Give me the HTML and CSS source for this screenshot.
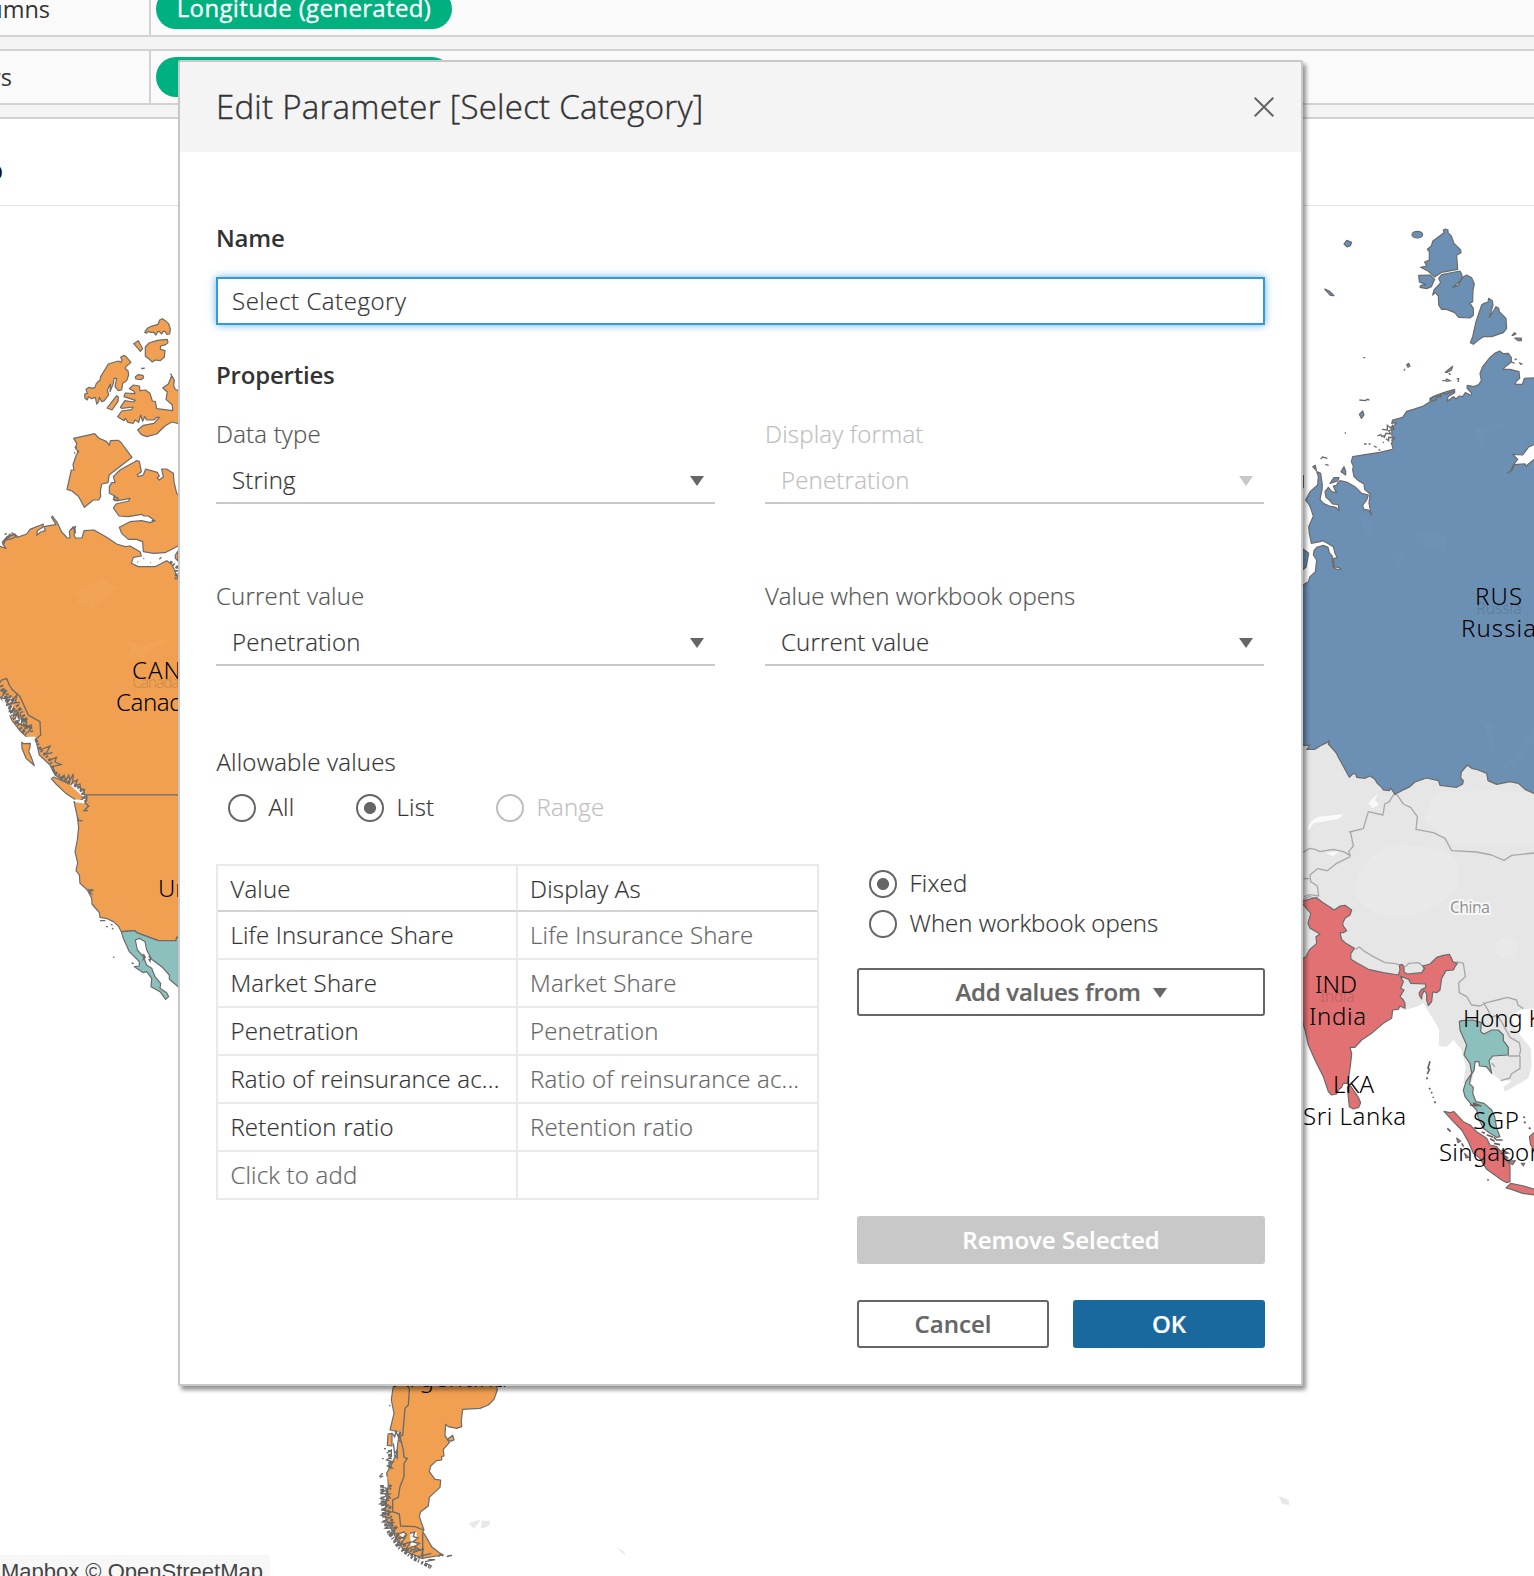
FILE: index.html
```html
<!DOCTYPE html>
<html lang="en">
<head>
<meta charset="utf-8">
<title>Edit Parameter</title>
<link rel="stylesheet" href="styles.css">
</head>
<body>
<div class="workbook">
  <div class="shelf shelf-columns">
    <div class="shelf-name"><span>Columns</span></div>
    <div class="shelf-body"><span class="pill"><span class="pill-text">Longitude (generated)</span></span></div>
  </div>
  <div class="shelf shelf-rows">
    <div class="shelf-name"><span>Rows</span></div>
    <div class="shelf-body"><span class="pill"></span></div>
  </div>
  <div class="sheet-title"><span>o</span></div>
  <svg class="map" width="1534" height="1370" viewBox="0 206 1534 1370">
    <!-- Asia base layer -->
    <g transform="translate(1290 800) scale(.33333)">
      <path class="asia" d="M30-180H740V625L695 628 660 650 690 705 722 745 725 800 715 835 680 855 645 875 640 862 665 842 630 840 600 815 560 780 545 850 520 850 527 800 515 750 490 720 470 740 446 738 448 690 425 650 400 610 380 620 345 630 310 620 180 500 40 480 30 480Z"/>
      <path class="asia-light" d="M330 350q-90 0-130-60-20-90 90-150 110-20 200 30 50 80-40 140-60 40-120 40z"/>
      <path class="asia-light" d="M490 130l242 0v-150l-120-10-180 10-30 80z"/>
      <path class="white" d="M54 82q14-36 58-34l50-6-16 14-50 10-24 2-18 24zM105 158l44-4-20 14zM235 10l30-32-10 22 12 14-20 10z"/>
      <circle class="asia-light" cx="650" cy="443" r="32"/>
      <g class="borders">
        <path d="M40 157L58 145 75 148 90 155 130 148 160 155 181 167 176 155 190 138 182 98 178 96 220 86 235 35 279 45 284 12 298 5 308-12 316-20 325-10 340 12 362 22 382 50 378 88 430 98 465 115 485 152 560 156 605 165 642 181 665 166 732 159"/>
        <path d="M181 170L140 190 112 212 82 206 60 225 62 245 82 258 86 288 60 284 42 290M40 236H58M40 298L58 290 80 296"/>
        <path d="M196 448L208 441 225 455 250 470 285 488 310 490 328 494M345 500L357 490 385 488 402 500 400 512M500 485L520 490 526 530 506 548 508 578 530 590 545 615 570 618 590 608 622 600 652 592 680 600 684 615 700 626M580 606L596 634 602 652 620 646 634 664 660 712 688 728 692 750 688 768 655 768M690 768L690 805 664 822 660 834 632 842M605 790L615 800"/>
      </g>
    </g>

    <!-- North America -->
    <g transform="translate(0 300) scale(.33333)">
      <g class="land orange">
        <path d="M434 97l8-12 12-6 20-6 5-13 8-4 9 6 10 9 5 16-2 15-8 1-6-9-5 0-5 8-7-7-5 0-5 10-7-8-9 0-7-3-6 6z"/>
        <path d="M401 131l14-9 13 24-7 8-10-12z"/>
        <path d="M436 141l11-12 25-8 30-3 2 10-7 6-15 4-1 10 14 4-2 19-12 11-15-2-9 6-11-10-10-7z"/>
        <path d="M406 231l8-7 15 2 2 7-8 6-15-2z"/>
        <path d="M258 268L268 262 278 265 285 262 289 250 300 240 302 230 325 192 355 183 362 187 366 180 362 172 372 166 380 172 393 187 378 200 376 206 384 212 386 225 380 242 368 250 365 270 355 272 345 260 350 235 342 235 340 250 330 275 331 252 322 270 326 285 313 302 305 305 298 292 296 305 290 312 286 292 275 296 265 290 262 300 255 295 254 282 262 280Z"/>
        <path d="M321 324L350 287 355 290 354 304 336 330Z"/>
        <path d="M353 350L365 333 395 329 399 321 365 325 361 322 375 302 400 306 406 301 372 290 376 279 405 281 402 274 388 266 400 255 418 258 420 272 436 270 450 280 457 303 466 304 470 326 518 332 517 315 498 298 502 276 488 264 505 252 515 227 523 240 521 258 526 268 540 275V372L515 366 495 378 470 402 440 410 424 404 413 390 430 376 462 370 478 352 470 352 462 360 440 360 434 350 428 364 422 345 416 367 405 360 400 370 384 367 376 355 372 362Z"/>
        <path d="M221 415L284 401 296 414 320 425 328 436 331 422 354 421 362 426 396 472 328 524 324 548 305 552 301 575 302 590 296 600 280 600 253 622 236 590 216 573 201 568 214 510 222 510 219 494 229 465 236 454 227 446 230 430Z"/>
        <path d="M328 560L328 580 345 588 340 598 355 602 390 595 386 603 348 612 340 624 357 648 385 650 425 643 432 648 445 648 465 662 450 668 425 662 390 665 358 682 365 700 385 718 410 718 428 725 430 755 460 760 495 758 540 735V590L530 580 522 545 520 520 500 507 485 507 490 530 478 540 472 534 478 528 472 517 437 507 430 525 415 530 412 524 424 515 418 484 410 482 360 510 340 530 345 548 335 548Z"/>
        <path d="M526 765l8-12v30l-8-8z"/>
        <path d="M-8 740L0 739 18 745 8 732 10 724 24 708 46 702 52 712 80 702 90 688 130 672 128 682 112 692 110 706 122 696 136 692 132 680 152 676 168 674 155 652 157 648 172 668 185 696 202 714 210 714 208 694 220 680 226 690 222 704 226 714 246 714 252 692 282 690 320 712 350 732 375 740 390 738 420 755 424 768 400 772 394 790 415 800 465 800 500 782 515 792 524 812 540 845V1485H254L250 1470 225 1455 195 1445 165 1425 150 1395 118 1365 108 1320 78 1310 58 1290 35 1260 18 1215-8 1180Z"/>
        <path d="M65 1327L72 1331 91 1330 90 1342 86 1354 94 1372 103 1397 78 1375 66 1345Z"/>
        <path d="M154 1436L162 1431 200 1448 225 1462 245 1485 248 1498 235 1504 215 1492 195 1478 168 1452Z"/>
        <path d="M222 1505L248 1508 258 1500 260 1485H540V1912H530L528 1922H475L410 1898 405 1892 364 1895 355 1878 340 1865 318 1855 300 1852 298 1838 276 1812 275 1795 262 1770 240 1750 238 1725 228 1712 233 1688 225 1655 232 1620 236 1582 232 1550Z"/>
      </g>
      <g class="land teal" transform="translate(0 870)"><path d="M364 1025L405 1022 410 1028 475 1052H528L530 1042H540V1195L508 1168 508 1155 485 1130 455 1108 440 1080 435 1055 418 1045 406 1050 412 1080 430 1100 440 1125 455 1135 465 1160 482 1180 480 1195 500 1208 506 1220 497 1228 480 1205 453 1190 455 1165 440 1145 430 1148 403 1130 418 1128 418 1115 388 1085 370 1045Z"/></g>
      <!-- Pacific coast inlets -->
      <g transform="translate(0 870)">
        <path class="sound" d="M8 320l20 50 22 10M30 325l8 50 30 25M70 445h36M212 580l40 38M225 632l28 4"/>
        <path class="fjord" d="M0 278L5 270 20 266 28 285 36 298 60 320 85 375 120 395 122 435 105 450"/>
        <path class="fringe" d="M4 285L20 330 40 380 65 420 85 435M28 318L55 350 80 395"/>
        <path class="fringe thin" d="M15 300L22 314 18 322 36 336 32 350 52 366 50 378 70 388 68 404 92 412 96 430M108 450L122 480 150 510 162 545 205 575 240 595 262 640"/>
        <path class="fjord" d="M0 300l14 8-10 16 20 4-4 18 14-6-6 24 16-4-4 20 14-14 4 26-14 6 20 6 2-18 14 12-6 18 20-6-10 18M36 330l14-14-4 22 14 0M60 370l6 22 14-6-2 26 18-8M120 480l30-12-12 24 20-4M145 512l24-10-4 14 18 8-26 6 10 22M180 558l4 12 8-14 6 16 8-16 4 14 10-18-2 24 14-6-6 16 14-4 2 16 12 0-6 14 14 6M262 620l-6 20 10 8-14 14 12 0M232 680l4 12h12M262 900l18 0-12 6 10 8M300 992h16M318 1010l6 0M336 1014l4 4M332 1004l6 0M340 1100l3 3M395 1118l6 4M428 1092l8 10-6 6 4-14M446 1098l6 6-2 10-4-8"/>
      </g>
      <path class="fjord" d="M424 203l4 4M428 206l6-2M511 221l4 4M14 704l6-4M26 703l6 0M34 698l8 4M6 728l14-16 20-8 10 4-14 8-20 4-6 16M14 720l20-14M224 440l6 4M222 458l4 2M230 452l6 4M340 590l14 4 0 8-12 0M455 662l10 0M412 785l2 2M430 776l3 0M450 788l2 0M478 778l6-6M210 690l16-10-4 14 6 6"/>
      <path class="fringe thin" d="M510 785L530 800 528 840"/>
      <path class="orange-light" d="M218 880l40-17 60-30 15 22 22 8-42 30-20 20-25 15-2-23-16 15-25-15 20-10zM380 1020l45 18 55-20 30 5-50 20-35 40-20-14-33 15 22-32z"/>
    </g>

    <!-- Russia -->
    <g transform="translate(1290 210) scale(.33333)">
      <g class="land blue">
        <ellipse cx="382" cy="74" rx="16" ry="10"/>
        <path d="M162 102l8-11 15 6-4 10-9 4zM104 237l14 6 14 14-11-1z"/>
        <path d="M462 68L460 60 466 57 474 60 474 68 484 78 492 100 512 120 513 128 500 136 503 178 455 187 434 201 415 184 392 172 410 168 404 156 418 150 418 125 412 118 424 108 428 94Z"/>
        <path d="M386 196L420 195 434 208 424 230 410 236 390 232 392 226 408 224 388 216Z"/>
        <path d="M446 205L455 194 510 183 516 195 514 210 488 232 504 226 520 200 530 195 545 203 553 222 549 240 548 275 540 280 550 295 550 316 540 324 506 322 494 308 470 298 455 298 446 285 445 258 436 248 428 255 432 240 446 225 452 218Z"/>
        <path d="M541 398L548 380 558 335 575 285 582 280 594 276 596 265 607 272 609 285 598 322 612 300 618 290 626 295 628 305 648 325 650 355 640 368 605 380 580 380 565 390 550 403Z"/>
        <path d="M666 376l8-8 4 4-8 4zM674 384l20 0 0 8-9 0z"/>
        <path d="M750 503L703 505 697 523 676 523 678 515 689 505 687 485 660 478 638 478 650 467 664 456 664 443 655 430 640 431 629 423 614 430 600 442 578 470 570 490 574 512 566 524 552 530 532 526 531 534 545 550 543 556 526 548 518 560 508 558 498 566 490 560 472 574 474 560 494 548 494 538 470 545 440 555 420 565 420 575 400 588 370 598 350 604 338 622 308 630 305 640 320 638 305 655 306 680 314 684 304 700 310 717 270 727 230 733 188 740 184 755 190 768 188 780 192 800 205 812 222 822 224 838 240 852 237 880 244 916 236 900 222 898 218 886 230 870 235 855 215 850 195 830 170 816 150 812 142 820 140 826 130 828 135 840 140 848 125 845 115 832 105 845 108 862 118 870 128 882 145 884 147 902 138 892 118 888 100 880 90 868 96 840 97 825 92 790 80 785 85 800 83 825 60 845 47 870 58 885 62 895 70 918 56 950 58 970 64 1000 90 995 98 992 110 998 130 1010 135 1030 142 1043 130 1046 132 1070 148 1073 153 1077 140 1078 130 1072 126 1048 128 1040 118 1028 114 1012 100 1006 80 1012 72 1022 70 1035 80 1050 76 1085 60 1100 55 1115 30 1130V1606L52 1606 60 1605 50 1618 75 1618 90 1608 110 1598 118 1592 115 1602 138 1628 155 1660 178 1702 188 1692 196 1690 200 1702 225 1705 240 1698 255 1708 262 1720 275 1732 280 1740 298 1742 302 1734 315 1753 335 1742 360 1730 375 1716 410 1704 445 1712 450 1726 500 1732 518 1722 520 1712 512 1704 514 1686 532 1665 545 1675 565 1680 590 1690 594 1712 620 1723 660 1715 685 1720 705 1738 732 1750H750Z"/>
        <path d="M153 785l9-15 5 13 0 12zM120 820l12-17 15 0-4 10zM68 770l8-4 3 16z"/>
        <path d="M350 464l6-4 4 8-6 4zM342 482l3-6M466 487l22-18-4 12-12 6zM208 613l10-10 4 12-8 10z"/>
        <path d="M30 1010L56 1030 48 1072 30 1085Z"/>
      </g>
      <path class="fjord" d="M220 443h6M208 570l18 2 6-4 6 2M457 512h10l3-5 10 5-12 2M500 506l6 0-2 10M476 490l6 4M420 570l10-10 20-3 10-7 8 3 12-6 14-2M423 574l15-4 4-10 14 0M276 658l16 2 0-14 10 8 6-8 4 12-16 4 6 10-14-2-6 14M262 678l10-4 4 6 8-4M288 686l8 6 0-10 16 2-8 8M222 702h8M236 702h6M252 708l8 4M266 718l4 4M278 696l4 2M164 669h4M92 747l6-6 14 4M106 763l10 3M674 460l-9-4M674 450l6-4M687 458l8 4-4 2M40 795v40"/>
      <g class="water">
        <path d="M745 698L715 712 698 735 668 733 683 748 668 768 662 785 652 790 668 778 672 764 705 762 708 768 745 738Z"/>
      </g>
      <path class="blue-light" d="M553 650l35 10 55-30-2 20-45 10-20 55-15-35zM565 1530q45 0 45 25l5 60-15 20-10-70zM210 905l40 40-15 30-20-30zM360 980l60-20 50 20v50l-60-20zM620 1675q70-30 112-135v50q-30 65-90 90zM300 1035l55-10-30 50z"/>
    </g>

    <!-- South and South-East Asia -->
    <g transform="translate(1290 800) scale(.33333)">
      <g class="land red">
        <path d="M30 306L56 298 80 293 95 305 133 330 150 318 165 316 185 330 180 345 165 355 158 370 160 378 170 392 160 398 150 398 155 418 165 428 193 445 182 462 183 478 200 488 235 508 280 518 325 525 330 510 328 496 336 493 342 500 342 516 352 522 395 518 404 505 398 498 420 492 440 472 460 466 478 463 486 478 488 485 502 490 495 500 490 510 468 512 455 535 450 570 440 578 428 576 425 605 415 617 410 600 410 580 402 572 396 585 395 597 388 585 388 578 395 568 408 562 406 552 362 550 356 538 330 528 340 545 332 565 342 570 330 590 340 600 345 610 345 625 330 618 325 628 308 630 305 655 280 670 245 700 215 720 195 742 180 742 185 760 182 790 178 820 172 850 160 850 155 862 145 870 140 882 125 885 115 875 100 830 75 780 55 735 45 690 30 640V480L48 470 58 450 80 430 78 410 90 402 60 385 54 370 62 340 45 320Z"/>
        <path d="M172 862L182 858 205 892 212 908 206 922 190 927 178 920Z"/>
        <path d="M462 934L480 938 492 935 520 965 540 975 560 995 590 1015 600 1035 620 1040 640 1062 660 1095 660 1145 650 1148 635 1140 590 1108 570 1075 550 1060 535 1025 515 990 490 965Z"/>
        <path d="M648 1164L662 1150 702 1158 740 1170V1186L698 1180 664 1168ZM718 1010L736 995V1055L722 1035ZM500 1014l12 10-8 4zM524 1060l12 12-8 2zM652 1084l24-2-8 12zM694 1090l10 0-4 8z"/>
      </g>
      <g class="land teal">
        <path d="M508 664L515 662 548 660 574 668 572 695 582 702 605 690 625 690 640 705 640 722 655 742 655 765 608 768 597 782 605 820 590 800 568 798 567 785 555 785 552 812 545 822 538 850 550 862 548 880 558 905 582 910 605 930 614 950 620 985 630 1010 620 1012 600 1000 580 985 565 955 560 930 545 915 525 890 520 870 528 845 545 820 540 790 522 765 530 735 510 690Z"/>
      </g>
      <path class="specks" d="M420 784l-6 20 4 4-6 14M410 832l2 6M417 864l4 4M424 876l2 4M430 890l0 4M434 904l2 6M472 985l10 10M592 1138l4 3M700 950l5 3M702 965l5 4M575 996l10 4M590 1004l20 8M600 1016l14 8M612 1012l6 6M618 1020h20M612 1030l18 4M635 1050l18 9-18 2 20 14M716 983l6 3M540 915l18 2-8-8 24 10M515 1030l6 10M556 1094l6 4"/>
    </g>

    <!-- South America -->
    <g transform="translate(360 1370) scale(.33333)">
      <g class="land orange">
        <path d="M105 30L98 60 94 90 102 130 90 180 118 186 114 215 110 250 96 280 80 310 85 345 78 400 75 440 100 490 130 540 185 565 250 555 238 548 215 530 195 495 188 485 192 480 178 440 182 425 205 408 208 382 240 352 242 330 225 328 208 305 212 288 230 272 245 270 245 260 252 258 250 238 268 218 255 196 257 163 265 170 290 175 305 170 304 152 308 118 360 115 385 105 402 88 412 60 405 30Z"/>
        <path d="M84 192l12-2 0 38-14-2zM262 208l16-12 4 14-10 4z"/>
      </g>
      <path class="white" d="M102 190l14-6-4 30-10 10zM150 490l20-4 0 20-10 10 14 8-22 4zM118 490l20-2-12 16zM62 320l20 0 0 20zM120 505l14 0-6 6z"/>
      <path class="border-line" d="M142 30L148 60 145 105 135 115 128 195 120 200 130 240 132 262 142 265 132 280 132 320 120 350 115 382 98 390 98 425 118 432 122 468 165 470 190 480M188 488V568"/>
      <path class="fringe" d="M90 240L90 300M66 345L68 400 72 440 82 480 116 532 160 565 210 590"/>
      <path class="fringe thin" d="M88 345L94 352 76 370 88 384 74 402 90 412 82 430 98 446 88 462 106 472 98 488 118 500 116 516 134 522 132 538 152 542 156 556 180 562"/>
      <path class="fjord" d="M60 350l24 6-20 12 26 4-28 14 20 6-22 10 26 4-20 14 28 6-30 10 24 8-20 12 32 2-24 16 34 0-22 18 30-2-14 20 32-8-18 24 34-10-16 24 32-12-8 20 30-12-6 22 30-8M96 190l8 10 4-16 6 14 8-12-6 24 10 8M100 220l4 30 8-10 0 24-10-8M80 250l14-10 0 20-14 10 20 6-18 12 18 8M58 320l10-10M60 322l10-4M120 490l12-4 8 8-10 10-12-4M150 490l14-4-4 14 14 4-16 12 20 4-14 10 20 12-30-4M195 575l30-6-20 0M200 582l14 6-6 8M236 560l4-6 10 4M260 560l16-4-14 2M66 266l5 0M72 236l6 0M88 105l3 3"/>
      <path class="falkland" d="M326 460l22-8 14-2-20 26zM366 452l24 0-2 14-16 8-10 0zM770 534l20 8 8 16z"/>
    </g>
    <path class="falkland" d="M1279 1496l10 4v5l-7-1z"/>
    <g class="basemap">
      <text x="132" y="688" textLength="48">Canada</text>
      <text x="1476" y="614" textLength="46">Russia</text>
      <text x="1320" y="1002" textLength="35">India</text>
      <text class="china" x="1450" y="913" textLength="40">China</text>
    </g>
    <g class="marks">
      <text x="132" y="679" textLength="49">CAN</text>
      <text x="116" y="711" textLength="80">Canada</text>
      <text x="158" y="897">United States</text>
      <text x="1475" y="605" textLength="47">RUS</text>
      <text x="1461" y="637" textLength="75">Russia</text>
      <text x="1315" y="993" textLength="42">IND</text>
      <text x="1309" y="1025" textLength="57">India</text>
      <text x="1463" y="1027" textLength="122">Hong Kong</text>
      <text x="1333" y="1093" textLength="41">LKA</text>
      <text x="1303" y="1125" textLength="103">Sri Lanka</text>
      <text x="1473" y="1129" textLength="46">SGP</text>
      <text x="1439" y="1161" textLength="113">Singapore</text>
      <text x="394" y="1387" textLength="113">Argentina</text>
    </g>
    <rect class="credit-bg" x="0" y="1555" width="270" height="21"/>
    <text class="credit" x="1" y="1579" textLength="262">Mapbox © OpenStreetMap</text>
  </svg>
</div>

<section class="dialog">
  <header class="dialog-head">
    <h1>Edit Parameter [Select Category]</h1>
    <svg class="close" width="20" height="20" viewBox="0 0 20 20"><path d="M.7.7l18.6 18.6M19.3.7L.7 19.3"/></svg>
  </header>
  <div class="dialog-body">
    <h2 class="label-name">Name</h2>
    <div class="name-input">Select Category</div>
    <h2 class="label-props">Properties</h2>
    <div class="fields">
      <div class="field"><label>Data type</label><div class="select"><span>String</span><i class="caret"></i></div></div>
      <div class="field disabled"><label>Display format</label><div class="select"><span>Penetration</span><i class="caret"></i></div></div>
      <div class="field"><label>Current value</label><div class="select"><span>Penetration</span><i class="caret"></i></div></div>
      <div class="field"><label class="tight">Value when workbook opens</label><div class="select"><span>Current value</span><i class="caret"></i></div></div>
    </div>
    <div class="allow-label">Allowable values</div>
    <div class="radios">
      <div class="radio r-all"><i class="dot"></i><span>All</span></div>
      <div class="radio r-list on"><i class="dot"></i><span>List</span></div>
      <div class="radio off"><i class="dot"></i><span>Range</span></div>
    </div>
    <div class="lower">
      <div class="table">
        <div class="row head"><div>Value</div><div>Display As</div></div>
        <div class="row"><div>Life Insurance Share</div><div>Life Insurance Share</div></div>
        <div class="row"><div>Market Share</div><div>Market Share</div></div>
        <div class="row"><div>Penetration</div><div>Penetration</div></div>
        <div class="row"><div>Ratio of reinsurance ac...</div><div>Ratio of reinsurance ac...</div></div>
        <div class="row"><div>Retention ratio</div><div>Retention ratio</div></div>
        <div class="row add"><div>Click to add</div><div></div></div>
      </div>
      <div class="side">
        <div class="radio on"><i class="dot"></i><span>Fixed</span></div>
        <div class="radio"><i class="dot"></i><span class="tight">When workbook opens</span></div>
        <div class="btn add-values"><span>Add values from</span><i class="caret"></i></div>
        <div class="btn remove"><span>Remove Selected</span></div>
        <div class="actions"><div class="btn"><span>Cancel</span></div><div class="btn ok"><span>OK</span></div></div>
      </div>
    </div>
  </div>
</section>
</body>
</html>
```
FILE: styles.css
```css
* { box-sizing: border-box; }
body {
  margin: 0;
  width: 1534px;
  height: 1576px;
  overflow: hidden;
  position: relative;
  background: #fff;
  color: #333;
  font: 300 24px/32px "Open Sans", "Noto Sans", sans-serif;
}

/* Worksheet behind the dialog */
.workbook { display: flex; flex-direction: column; background: #f4f4f4; }
.shelf { display: flex; background: #fafafa; border-bottom: 2px solid #d2d2d2; }
.shelf-columns { height: 37px; }
.shelf-rows { height: 56px; margin-top: 12px; border-top: 2px solid #d2d2d2; }
.shelf-name { width: 151px; border-right: 2px solid #d2d2d2; display: flex; overflow: hidden; font-weight: 400; font-size: 23.5px; }
.shelf-name span { margin-left: -50px; width: 100px; text-align: right; height: 32px; }
.shelf-columns .shelf-name span { margin-top: -7px; }
.shelf-rows .shelf-name span { margin-left: -88px; margin-top: 10px; }
.shelf-body { padding-left: 5px; }
.pill { display: flex; justify-content: center; width: 296px; height: 40px; border-radius: 20px; background: #00b180; color: #fff; font-weight: 400; letter-spacing: .35px; -webkit-text-stroke: .3px #fff; }
.shelf-columns .pill { margin-top: -11px; }
.shelf-rows .pill { margin-top: 6px; }
.pill-text { line-height: 38px; white-space: nowrap; }
.sheet-title { height: 89px; margin-top: 12px; border-top: 2px solid #d2d2d2; border-bottom: 1px solid #e4e4e4; background: #fff; font-size: 27px; font-weight: 400; color: #111; overflow: hidden; }
.sheet-title span { display: block; margin: 35px 0 0 -13px; }
.map { display: block; background: #fff; }

/* Map regions */
.land path, .land ellipse { stroke: #6b6b6b; stroke-width: 3.6; stroke-linejoin: round; }
.orange { fill: #f1a052; }
.blue { fill: #6c8fb4; }
.red { fill: #e27173; }
.teal { fill: #8cc0bc; }
.orange-light { fill: #f6a75a; opacity: .4; }
.blue-light { fill: #7898bb; opacity: .25; }
.fjord, .border-line { fill: none; stroke: #6b6b6b; stroke-width: 4; }
.sound { fill: none; stroke: #fff; stroke-width: 9; }
.fringe { fill: none; stroke: #6b6b6b; stroke-width: 11; stroke-dasharray: 6 5 9 4 4 7; }
.fringe.thin { stroke-width: 9; stroke-dasharray: 8 4 5 6; }
.specks { fill: none; stroke: #6f5b5e; stroke-width: 5; }
.water path { fill: #fff; stroke: #6b6b6b; stroke-width: 3.6; }
.asia { fill: #e6e6e6; }
.asia-light { fill: #e9e9e9; }
.white { fill: #fafafa; }
.borders { fill: none; stroke: #a8a8a8; stroke-width: 4; stroke-linejoin: round; }
.falkland { fill: #e8e8e8; }
.marks { fill: #000; font: 300 24px "Noto Sans", "Open Sans", sans-serif; }
.basemap { fill: #000; fill-opacity: .12; font: 400 16px "Noto Sans", sans-serif; }
.china { fill: #949494; fill-opacity: 1; stroke: #f6f6f6; stroke-width: 4px; paint-order: stroke; }
.credit-bg { fill: #f7f7f7; }
.credit { fill: #444; font: 400 22px "Liberation Sans", sans-serif; }

/* Dialog window */
.dialog {
  position: absolute;
  left: 178px;
  top: 60px;
  width: 1125px;
  height: 1326px;
  background: #fff;
  border: 2px solid #c8c8c8;
  border-radius: 2px;
  box-shadow: 3px 4px 4px rgba(0, 0, 0, .42);
  letter-spacing: .2px;
  -webkit-text-stroke: .2px currentColor;
}
.dialog-head { height: 90px; background: #f4f4f4; display: flex; justify-content: space-between; padding: 0 27px 0 36px; }
h1 { margin: 23px 0 0; font: 300 33px/44px "Open Sans", sans-serif; white-space: nowrap; letter-spacing: .25px; -webkit-text-stroke: .4px currentColor; }
.close { margin-top: 35px; fill: none; stroke: #666; stroke-width: 2; }
.dialog-body { padding: 0 36px; }
h2 { margin: 0; font: 600 24px/32px "Open Sans", sans-serif; height: 32px; letter-spacing: -.2px; -webkit-text-stroke: 0; }
.label-name { margin-top: 70px; }
.name-input { margin-top: 23px; height: 48px; border: 2px solid #3399dd; box-shadow: 0 0 8px rgba(51, 153, 221, .75); padding: 6px 14px; letter-spacing: .55px; }
.label-props { margin-top: 34px; }
.fields { display: grid; grid-template-columns: 499px 499px; column-gap: 50px; row-gap: 76px; margin-top: 27px; }
.field { height: 86px; }
.field label { display: block; height: 32px; color: #555; }
.field label.tight, .radio .tight { letter-spacing: 0; }
.select { height: 54px; border-bottom: 2px solid #c8c8c8; display: flex; justify-content: space-between; padding: 14px 11px 0 16px; }
.caret { width: 0; height: 0; border: 7.5px solid transparent; border-top: 10px solid #666; border-bottom: 0; margin-top: 12px; }
.disabled, .disabled label { color: #bebebe; }
.disabled .caret { border-top-color: #c8c8c8; }
.allow-label { margin-top: 80px; height: 32px; padding-left: .5px; }
.radios { display: flex; margin: 16px 0 0 12px; height: 28px; }
.radio { display: flex; height: 28px; }
.radio span { margin: -3px 0 0 12.5px; white-space: nowrap; }
.r-all { width: 128px; }
.r-list { width: 140px; }
.dot { width: 28px; height: 28px; flex: none; border: 2px solid #666; border-radius: 50%; background: #fff; }
.on .dot { background: radial-gradient(circle, #666 5.6px, transparent 6.4px); }
.off { color: #bebebe; }
.off .dot { border-color: #bebebe; }
.lower { display: flex; justify-content: space-between; margin-top: 42px; }
.table { width: 603px; height: 336px; border: 2px solid #e9e9e9; border-bottom: 0; }
.row { display: grid; grid-template-columns: 300px 299px; height: 48px; }
.row div { border-bottom: 2px solid #e9e9e9; padding: 7px 0 0 12.4px; white-space: nowrap; }
.row div:first-child { border-right: 2px solid #e9e9e9; }
.row div:last-child { color: #666; padding-left: 12px; }
.row.head { height: 46px; }
.row.head div { border-bottom-color: #d2d2d2; color: #333; }
.row.add div { color: #666; }
.side { width: 408px; padding-top: 6px; display: flex; flex-direction: column; }
.side .radio { margin: 0 0 12px 12px; }
.btn { height: 48px; border: 2px solid #666; border-radius: 3px; display: flex; justify-content: center; color: #666; font-weight: 600; line-height: 43px; letter-spacing: 0; }
.add-values { margin-top: 18px; letter-spacing: -.25px; }
.add-values span { margin-right: 12px; }
.add-values .caret { margin-top: 18px; }
.remove { margin-top: 200px; background: #c8c8c8; border-color: #c8c8c8; color: #fff; }
.actions { display: grid; grid-template-columns: 192px 192px; gap: 24px; margin-top: 36px; }
.ok { background: #1a699e; border-color: #1a699e; color: #fff; }
```
